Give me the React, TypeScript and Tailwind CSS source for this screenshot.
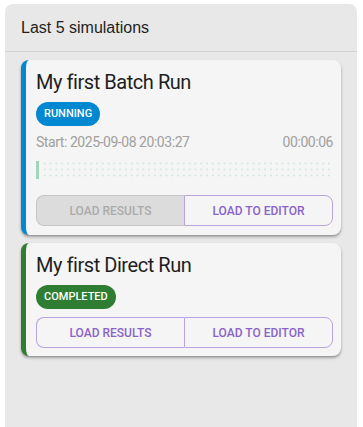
import React from "react";

function Dots() {
  return (
    <svg width="100%" height="18" className="block">
      <defs>
        <pattern id="dots" x="0" y="0" width="5.8" height="6" patternUnits="userSpaceOnUse">
          <circle cx="2.9" cy="2.5" r="1.1" fill="#d3e8dc" />
        </pattern>
      </defs>
      <rect x="6" y="0" width="100%" height="18" fill="url(#dots)" />
      <rect x="0" y="0" width="3" height="18" fill="#a3d5bd" />
    </svg>
  );
}

function Buttons({ disabledLeft }: { disabledLeft?: boolean }) {
  return (
    <div className="flex h-[31px] text-[12px] font-medium">
      {disabledLeft ? (
        <div className="flex-1 flex items-center justify-center rounded-l-lg border border-[#c6c6c6] border-r-0 bg-[#dcdcdc] text-[#ababab]">
          LOAD RESULTS
        </div>
      ) : (
        <div className="flex-1 flex items-center justify-center rounded-l-lg border border-[#b9a4e0] border-r-0 text-[#8a63c9]">
          LOAD RESULTS
        </div>
      )}
      <div className="flex-1 flex items-center justify-center rounded-r-lg border border-[#b9a4e0] text-[#8a63c9]">
        LOAD TO EDITOR
      </div>
    </div>
  );
}

export default function App() {
  return (
    <div
      className="w-[363px] h-[427px] bg-white pt-[4px] pl-[5px] pr-[6px] overflow-hidden"
      style={{ fontFamily: '"Liberation Sans", Arial, sans-serif' }}
    >
      <div className="h-[423px] bg-[#e8e8e8] rounded-t-lg">
        <div className="h-[48px] flex items-center px-4 text-[16px] text-[#1e1e1e] border-b border-[#d2d2d2]">
          Last 5 simulations
        </div>
        <div className="flex flex-col gap-2 px-4 pt-2 font-['Roboto',sans-serif]">
          <div className="bg-[#f5f5f5] rounded-lg border-l-[5px] border-[#0288d1] pl-[10px] pr-[8px] pt-[8px] pb-[9px] shadow-[0_2px_3px_rgba(0,0,0,0.3),0_1px_1px_rgba(0,0,0,0.1)]">
            <div className="text-[20px] leading-[28px] tracking-[-0.45px] text-[#1e1e1e]">My first Batch Run</div>
            <div className="mt-[6px] flex">
              <div className="h-[24px] px-[8px] rounded-full bg-[#0288d1] text-white text-[11px] font-medium flex items-center">
                RUNNING
              </div>
            </div>
            <div className="mt-[6px] flex justify-between text-[14px] leading-[20px] tracking-[-0.45px] text-[#a0a0a0]">
              <span>Start: 2025-09-08 20:03:27</span>
              <span>00:00:06</span>
            </div>
            <div className="mt-[9px]">
              <Dots />
            </div>
            <div className="mt-[16px]">
              <Buttons disabledLeft />
            </div>
          </div>
          <div className="bg-[#f5f5f5] rounded-lg border-l-[5px] border-[#2e7d32] pl-[10px] pr-[8px] pt-[8px] pb-[8px] shadow-[0_2px_3px_rgba(0,0,0,0.3),0_1px_1px_rgba(0,0,0,0.1)]">
            <div className="text-[20px] leading-[28px] tracking-[-0.45px] text-[#1e1e1e]">My first Direct Run</div>
            <div className="mt-[6px] flex">
              <div className="h-[24px] px-[8px] rounded-full bg-[#2e7d32] text-white text-[11px] font-medium flex items-center">
                COMPLETED
              </div>
            </div>
            <div className="mt-[8px]">
              <Buttons />
            </div>
          </div>
        </div>
      </div>
    </div>
  );
}
